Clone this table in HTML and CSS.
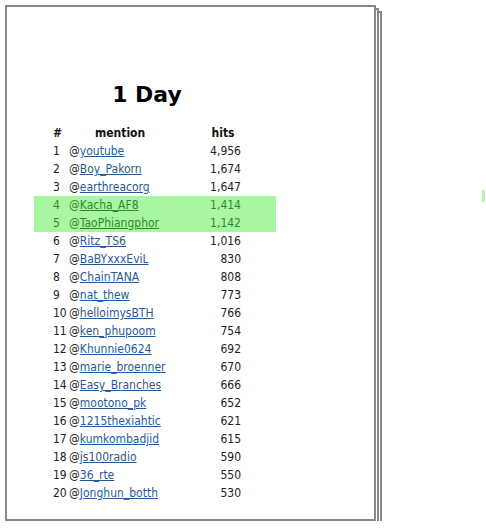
FILE: index.html
```html
<!DOCTYPE html>
<html lang="en">
<head>
    <meta charset="UTF-8">
    <meta name="viewport" content="width=device-width, initial-scale=1.0">
    <title>1 Day</title>
    <link rel="stylesheet" href="styles.css">
</head>
<body>
    <div class="sheet">
        <h1 class="title">1 Day</h1>
        <div class="list">
            <div class="row head"><span>#</span><span class="mention">mention</span><span class="hits">hits</span></div>
            <div class="row"><span>1</span><span>@<a href="#">youtube</a></span><span class="hits">4,956</span></div>
            <div class="row"><span>2</span><span>@<a href="#">Boy_Pakorn</a></span><span class="hits">1,674</span></div>
            <div class="row"><span>3</span><span>@<a href="#">earthreacorg</a></span><span class="hits">1,647</span></div>
            <div class="row hl"><span>4</span><span>@<a href="#">Kacha_AF8</a></span><span class="hits">1,414</span></div>
            <div class="row hl"><span>5</span><span>@<a href="#">TaoPhiangphor</a></span><span class="hits">1,142</span></div>
            <div class="row"><span>6</span><span>@<a href="#">Ritz_TS6</a></span><span class="hits">1,016</span></div>
            <div class="row"><span>7</span><span>@<a href="#">BaBYxxxEviL</a></span><span class="hits">830</span></div>
            <div class="row"><span>8</span><span>@<a href="#">ChainTANA</a></span><span class="hits">808</span></div>
            <div class="row"><span>9</span><span>@<a href="#">nat_thew</a></span><span class="hits">773</span></div>
            <div class="row"><span>10</span><span>@<a href="#">helloimysBTH</a></span><span class="hits">766</span></div>
            <div class="row"><span>11</span><span>@<a href="#">ken_phupoom</a></span><span class="hits">754</span></div>
            <div class="row"><span>12</span><span>@<a href="#">Khunnie0624</a></span><span class="hits">692</span></div>
            <div class="row"><span>13</span><span>@<a href="#">marie_broenner</a></span><span class="hits">670</span></div>
            <div class="row"><span>14</span><span>@<a href="#">Easy_Branches</a></span><span class="hits">666</span></div>
            <div class="row"><span>15</span><span>@<a href="#">mootono_pk</a></span><span class="hits">652</span></div>
            <div class="row"><span>16</span><span>@<a href="#">1215thexiahtic</a></span><span class="hits">621</span></div>
            <div class="row"><span>17</span><span>@<a href="#">kumkombadjid</a></span><span class="hits">615</span></div>
            <div class="row"><span>18</span><span>@<a href="#">js100radio</a></span><span class="hits">590</span></div>
            <div class="row"><span>19</span><span>@<a href="#">36_rte</a></span><span class="hits">550</span></div>
            <div class="row"><span>20</span><span>@<a href="#">Jonghun_botth</a></span><span class="hits">530</span></div>
        </div>
    </div>
    <div class="marker"></div>
</body>
</html>
```

FILE: styles.css
```css
body {
    margin: 0;
    padding: 0;
    background-color: #fff;
    font-family: Tahoma, "DejaVu Sans Condensed", "DejaVu Sans", sans-serif;
    font-size: 12px;
    color: #222;
}

/* front page with two pages stacked behind it */
.sheet {
    box-sizing: border-box;
    width: 371px;
    height: 516px;
    margin: 5px 0 0 5px;
    padding: 75px 0 0 27px;
    border: 2px solid #888;
    background-color: #fff;
    box-shadow: 3px 3px 0 -2px #fff, 3px 3px 0 0 #888, 6px 6px 0 -2px #fff, 6px 6px 0 0 #888;
}

.title {
    width: 226px;
    margin: 0 0 16px 0;
    font-family: "DejaVu Sans", sans-serif;
    font-size: 22px;
    line-height: 26px;
    font-weight: bold;
    text-align: center;
    color: #000;
}

.list {
    width: 242px;
}

.row {
    display: grid;
    grid-template-columns: 16px 1fr 36px;
    height: 18px;
    line-height: 18px;
    padding: 0 35px 0 19px;
    white-space: nowrap;
}

.row .hits {
    text-align: right;
}

.row a {
    color: #1f5b9c;
    text-decoration: underline;
}

.head {
    font-weight: bold;
    color: #111;
}

.head .mention {
    padding-left: 26px;
}

.head .hits {
    text-align: center;
}

.hl {
    background-color: #a9f6a2;
    color: #2f8a2f;
}

.hl a {
    color: #2f8a2f;
}

.marker {
    position: absolute;
    left: 482px;
    top: 190px;
    width: 3px;
    height: 12px;
    background-color: #b3f3ab;
}
```
